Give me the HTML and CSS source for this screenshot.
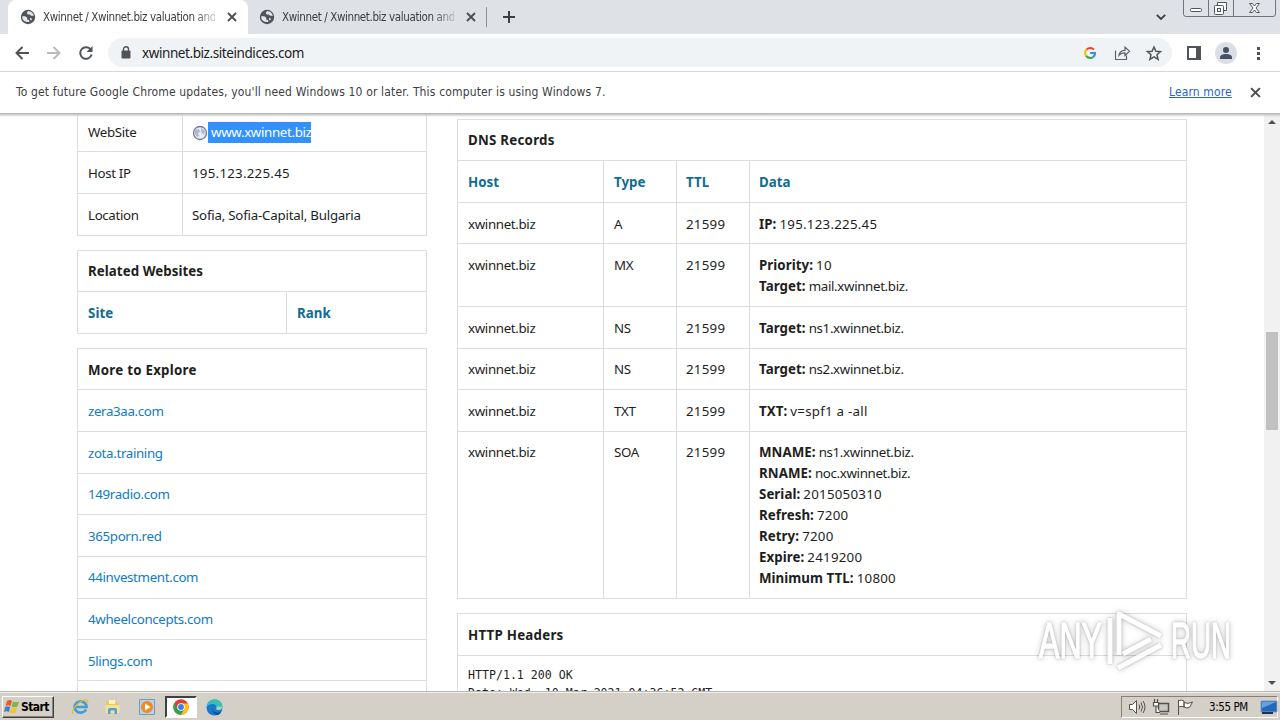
FILE: index.html
```html
<!DOCTYPE html>
<html lang="en">
<head>
<meta charset="utf-8">
<title>Xwinnet / Xwinnet.biz valuation and</title>
<link rel="stylesheet" href="styles.css">
</head>
<body>
<svg width="0" height="0" class="defs">
  <symbol id="globe" viewBox="0 0 16 16"><circle cx="8" cy="8" r="7.2" fill="#50545a"/><path d="M2.2 7.2h3.2l1.8 1.6v1.7l2 .8v1.6c-3 .8-6-.8-6.8-3.4zM8 2.1l-1.2 2 .9 1.3h2.1l1.2 1.4h2.8C13.500 4.300 11 2.200 8 2.100zM11 8.500l-1.300 1.300.8 1.400 1.500-.2z" fill="#e3e6ea"/></symbol>
  <symbol id="x" viewBox="0 0 10 10"><path d="M1 1l8 8M9 1l-8 8" stroke="#4a4d51" stroke-width="1.8" fill="none"/></symbol>
</svg>
<div class="screen">
  <header class="tabs">
    <div class="tab active"><svg class="fav"><use href="#globe"/></svg><span class="tab-title">Xwinnet / Xwinnet.biz valuation and</span><svg class="tab-x"><use href="#x"/></svg></div>
    <div class="tab"><svg class="fav"><use href="#globe"/></svg><span class="tab-title">Xwinnet / Xwinnet.biz valuation and</span><svg class="tab-x"><use href="#x"/></svg></div>
    <i class="tab-sep"></i>
    <svg class="plus" width="12" height="12" viewBox="0 0 12 12"><path d="M6 0v12M0 6h12" stroke="#3c4043" stroke-width="2"/></svg>
    <svg class="chev" width="10" height="7" viewBox="0 0 10 7"><path d="M.8.800 5 5l4.200-4.200" fill="none" stroke="#3c4043" stroke-width="1.800"/></svg>
    <svg class="winbtns" width="93" height="17" viewBox="0 0 93 17" fill="none" stroke="#70767e">
      <path d="M.5 0v14q0 2.500 2.500 2.500h87q2.500 0 2.500-2.500V0M25.500 0v16M50.500 0v16" fill="#dfe2e7"/>
      <rect x="7.500" y="8.500" width="11" height="3" rx="1" fill="#fff" stroke="#50565e"/>
      <g stroke="#50565e"><path d="M34.500 5V2.500h9v8H41" fill="#fff"/><rect x="31.500" y="5.500" width="9" height="9" rx="1" fill="#fff"/><rect x="34.500" y="8.500" width="3" height="3"/>
      <path d="M66.500 3.500h3l2 2.500 2-2.500h3l-3.500 4.500 3.500 4.500h-3l-2-2.500-2 2.500h-3l3.500-4.500z" fill="#fff"/></g>
    </svg>
  </header>
  <div class="toolbar">
    <svg class="nav" width="100" height="24" viewBox="0 0 100 24" fill="none" stroke-width="2">
      <path d="M22 12H9.500M15.500 6l-6 6 6 6" stroke="#505357"/>
      <path d="M40 12h12M46.500 6l6 6-6 6" stroke="#b8babd"/>
      <path d="M83.800 8.700A5.800 5.800 0 1 0 84.600 13.500" stroke="#505357"/><path d="M85.500 5v6h-6z" fill="#505357"/>
    </svg>
    <div class="omnibox">
      <svg class="lock" width="10" height="13" viewBox="0 0 10 13"><rect x=".5" y="4.500" width="9" height="8" rx="1" fill="#505357"/><path d="M2.500 5V3.200a2.500 2.500 0 0 1 5 0V5" fill="none" stroke="#505357" stroke-width="1.400"/></svg>
      <span class="url">xwinnet.biz.siteindices.com</span>
      <svg class="omni-icons" width="80" height="20" viewBox="0 0 80 20" fill="none">
        <g stroke-width="2.100"><path d="M9.900 6.600A5 5 0 0 0 2.500 6.600" stroke="#ea4335"/><path d="M2.500 6.500a5.200 5.200 0 0 0-.2 6.500" stroke="#fbbc05"/><path d="M2.200 12.800a5 5 0 0 0 7.100 1.200" stroke="#34a853"/><path d="M9.300 14A4.800 4.800 0 0 0 11 10H6.200" stroke="#4285f4"/></g>
        <path d="M31.500 7.500v9h11v-4M35 12.500q.5-5 6-5.200V4.100l4.500 4.200-4.500 4.200V9.900q-4-.1-6 2.600z" stroke="#5f6368" stroke-width="1.200"/>
        <path d="M70 4l1.900 4.300 4.600.4-3.500 3.100 1.100 4.600-4.100-2.500-4.100 2.500 1.100-4.600-3.500-3.100 4.600-.4z" stroke="#505357" stroke-width="1.500"/>
      </svg>
    </div>
    <svg class="right-icons" width="84" height="24" viewBox="0 0 84 24">
      <rect x="2" y="6" width="12" height="12" fill="none" stroke="#505357" stroke-width="2"/><path d="M10 5H15v14H10z" fill="#505357"/>
      <circle cx="40" cy="12" r="11" fill="#dadfe6"/><circle cx="40" cy="9" r="3" fill="#475066"/><path d="M34 18v-1.500q0-3.500 6-3.500t6 3.500V18z" fill="#475066"/>
      <path d="M71 6h3v3h-3zM71 11h3v3h-3zM71 16h3v3h-3z" fill="#505357"/>
    </svg>
  </div>
  <div class="infobar"><span class="notice">To get future Google Chrome updates, you'll need Windows 10 or later. This computer is using Windows 7.</span><span class="learn">Learn more</span><svg class="info-x"><use href="#x"/></svg></div>
  <main class="page">
    <div class="col left">
      <section class="panel site">
        <div class="row first"><div class="cell">WebSite</div><div class="cell"><svg width="16" height="16" viewBox="0 0 16 16"><circle cx="8" cy="8" r="6.500" fill="#e9edf5" stroke="#77779b" stroke-width="1.300"/><path d="M3 5l4-1 1 3-2 1 1 3-2 1-2-3zM9 3l4 3-1 4-3-3z" fill="#aeb8d4"/></svg><span class="selected">&nbsp;www.xwinnet.biz</span></div></div>
        <div class="row r42"><div class="cell">Host IP</div><div class="cell num">195.123.225.45</div></div>
        <div class="row r42"><div class="cell">Location</div><div class="cell loc">Sofia, Sofia-Capital, Bulgaria</div></div>
      </section>
      <section class="panel boxed related">
        <div class="row r41 high"><h2>Related Websites</h2></div>
        <div class="row r42 head"><div class="cell">Site</div><div class="cell">Rank</div></div>
      </section>
      <section class="panel boxed links">
        <div class="row r41"><h2>More to Explore</h2></div>
        <div class="row r42"><a>zera3aa.com</a></div>
        <div class="row r42"><a>zota.training</a></div>
        <div class="row r41 high"><a>149radio.com</a></div>
        <div class="row r42"><a>365porn.red</a></div>
        <div class="row r42 high"><a>44investment.com</a></div>
        <div class="row r41 high"><a>4wheelconcepts.com</a></div>
        <div class="row r41"><a>5lings.com</a></div>
        <div class="row r41"></div>
      </section>
    </div>
    <div class="col right">
      <section class="panel boxed dns">
        <div class="row r41 high"><h2>DNS Records</h2></div>
        <div class="row r42 head"><div class="cell">Host</div><div class="cell">Type</div><div class="cell">TTL</div><div class="cell">Data</div></div>
        <div class="row r41"><div class="cell">xwinnet.biz</div><div class="cell">A</div><div class="cell num">21599</div><div class="cell"><p><b>IP:</b> <span class="num">195.123.225.45</span></p></div></div>
        <div class="row r63"><div class="cell">xwinnet.biz</div><div class="cell">MX</div><div class="cell num">21599</div><div class="cell"><p><b>Priority:</b> <span class="num">10</span></p><p><b>Target:</b> mail.xwinnet.biz.</p></div></div>
        <div class="row r42"><div class="cell">xwinnet.biz</div><div class="cell">NS</div><div class="cell num">21599</div><div class="cell"><p><b>Target:</b> ns1.xwinnet.biz.</p></div></div>
        <div class="row r41 high"><div class="cell">xwinnet.biz</div><div class="cell">NS</div><div class="cell num">21599</div><div class="cell"><p><b>Target:</b> ns2.xwinnet.biz.</p></div></div>
        <div class="row r42"><div class="cell">xwinnet.biz</div><div class="cell">TXT</div><div class="cell num">21599</div><div class="cell"><p><b>TXT:</b> <span class="num">v=spf1 a -all</span></p></div></div>
        <div class="row r167 high"><div class="cell">xwinnet.biz</div><div class="cell">SOA</div><div class="cell num">21599</div><div class="cell"><p><b>MNAME:</b> ns1.xwinnet.biz.</p><p><b>RNAME:</b> noc.xwinnet.biz.</p><p><b>Serial:</b> <span class="num">2015050310</span></p><p><b>Refresh:</b> <span class="num">7200</span></p><p><b>Retry:</b> <span class="num">7200</span></p><p><b>Expire:</b> <span class="num">2419200</span></p><p><b>Minimum TTL:</b> <span class="num">10800</span></p></div></div>
      </section>
      <section class="panel boxed http">
        <div class="row r42"><h2>HTTP Headers</h2></div>
        <pre>HTTP/1.1 200 OK
Date: Wed, 10 Mar 2021 04:36:52 GMT</pre>
      </section>
    </div>
    <div class="scroll"><i class="up"></i><i class="thumb"></i><i class="down"></i></div>
  </main>
  <footer class="taskbar">
    <div class="start"><svg width="16" height="16" viewBox="0 0 16 16"><path d="M3 2q3-2 5 0L6.500 7q-2-1.500-5 0z" fill="#e65a2c"/><path d="M9 2.500q3 1.500 6 0l-1.500 5q-3 1.500-6 0z" fill="#79b943"/><path d="M1.200 8q3-1.500 5 0L5 13q-2-1.500-5 0z" fill="#3c82c9"/><path d="M7.200 8.500q3 1.500 6 0l-1.500 5q-3 1.500-6 0z" fill="#f5c330"/></svg><b>Start</b></div>
    <svg class="ql ie" width="18" height="18" viewBox="0 0 18 18" fill="none"><path d="M15 11.500a6 5.600 0 1 1 .6-2.500H5" stroke="#3f9ed8" stroke-width="2.600"/><path d="M2 15.500C-1 12 12-1 16.500 2.500q.8.700-.3 2.500" stroke="#e5b83c" stroke-width="1.300"/></svg>
    <svg class="ql folder" width="18" height="18" viewBox="0 0 18 18"><path d="M2 3h5l1.500 1.500H15V15H2z" fill="#e8c968"/><path d="M5 2h6v4H5z" fill="#fff3b9"/><path d="M1.500 7h14v8h-14z" fill="#f6e296"/><path d="M4 16v-4.500q0-1.500 1.500-1.500h6q1.500 0 1.500 1.500V16h-2.500v-3.500h-4V16z" fill="#56a2cf"/></svg>
    <svg class="ql wmp" width="18" height="18" viewBox="0 0 18 18"><path d="M1.500 1.500h15v15h-15z" fill="#b9d2ea" stroke="#6f9bc4"/><circle cx="9" cy="9" r="6" fill="#f28a1c"/><path d="M7 5.500 12.500 9 7 12.500z" fill="#fff"/></svg>
    <div class="task-active"><svg width="16" height="16" viewBox="0 0 16 16"><circle cx="8" cy="8" r="7.700" fill="#e33e32"/><path d="M1.300 4.200A7.700 7.700 0 0 0 8 15.700L11.300 10 8 8H4z" fill="#2fa24d"/><path d="M8 15.700A7.700 7.700 0 0 0 14.700 4.500H8L11.300 10z" fill="#fcc31e"/><circle cx="8" cy="8" r="3.800" fill="#fff"/><circle cx="8" cy="8" r="2.900" fill="#3c7de8"/></svg></div>
    <svg class="ql edge" width="17" height="17" viewBox="0 0 17 17"><circle cx="8.500" cy="8.500" r="8" fill="#1879c8"/><path d="M.6 8C1 3.500 4.500.5 8.500.500c5 0 8 3.500 8 6.800 0 4-4.500 4.600-6.500 3.200 1-1 1.200-2.500.3-3.800C8.500 4 3 4.500.600 8z" fill="#36bfb2"/><path d="M6.500 8q-1.500 5 5 5.700 2 .2 4-1.200-1.200 2.500-3.500 3.500C8 16 5 12 6.500 8z" fill="#144b93"/><path d="M10 10.500q1-1 .3-3l6.200.2q-.1 4-6.500 2.800z" fill="#d6d4cc" opacity=".75"/></svg>
    <div class="tray">
      <svg width="66" height="18" viewBox="0 0 66 18" fill="#fff" stroke="#55524d">
        <path d="M1.500 6.500h3l4-4v13l-4-4h-3z"/><path d="M11 6.500q1.500 2.500 0 5M13 4.500q3 4.500 0 9M15 3q4 6 0 12" fill="none"/>
        <path d="M30.500 5.500h10v8h-10z" fill="#c8c8c4" stroke-width="1.500"/><path d="M32 16h8M26.500 1v4M29.500 1v4M25.500 4.500h5V8h-5zM28 8v6.500h4" stroke-width="1.200"/>
        <path d="M50.500 17V2M50.500 2.500q3-1 5.500.5v6q-3-1.500-5.500 0zM56 4.500q4 2 8.500-.5l-3 5.500q-3 1-5.500-.5z"/>
      </svg>
      <span class="clock">3:55 PM</span>
      <svg width="18" height="16" viewBox="0 0 18 16"><path d="M1 2h16v11H1z" fill="#2669bb" stroke="#7b9bc1"/><path d="M2 3h14l-14 6z" fill="#65a0e1"/><path d="M2 14h11" stroke="#1c3258" stroke-width="2"/></svg>
    </div>
  </footer>
  <svg class="watermark" width="204" height="68" viewBox="0 0 204 68">
    <g fill="#fff" stroke="#fff" stroke-width="1.500">
      <text x="2" y="50" textLength="63" lengthAdjust="spacingAndGlyphs">ANY</text>
      <text x="134" y="50" textLength="60" lengthAdjust="spacingAndGlyphs">RUN</text>
    </g>
    <g fill="none" stroke="#fff" stroke-width="5" stroke-linejoin="round"><path d="M82 47V6l42 22"/><path d="M73 10v46M81 60l43-23M86 46l28-15"/></g>
  </svg>
</div>
</body>
</html>
```
FILE: styles.css
```css
* { box-sizing: border-box; }
body { margin: 0; font-family: "Noto Sans", sans-serif; }
.defs { position: absolute; }
.screen { position: relative; width: 1280px; height: 720px; overflow: hidden; display: flex; flex-direction: column; background: #fff; }
svg { flex: none; display: block; }

.tabs { height: 34px; flex: none; background: #dee1e6; display: flex; align-items: center; padding-left: 8px; font-size: 12px; color: #3c4043; }
.tab { width: 239px; height: 34px; display: flex; align-items: center; padding-left: 12px; }
.tab.active { width: 240px; background: #fff; border-radius: 8px 8px 0 0; }
.fav { width: 16px; height: 16px; }
.tab:not(.active) .fav { margin-left: -1px; }
.tab-title { width: 172px; margin-left: 7px; white-space: nowrap; overflow: hidden; font-family: "DejaVu Sans Condensed", "DejaVu Sans", sans-serif; font-size: 11.5px; letter-spacing: -.38px; -webkit-mask-image: linear-gradient(90deg, #000 150px, rgba(0,0,0,.25)); }
.tab-x { width: 10px; height: 10px; margin-left: 12px; }
.tab-sep { width: 1px; height: 20px; background: #8c9095; margin-left: -1px; }
.plus { margin-left: 16px; }
.chev { margin-left: 641px; }
.winbtns { margin-left: 17px; align-self: flex-start; }

.toolbar { height: 38px; flex: none; display: flex; align-items: center; border-bottom: 1px solid #d5d7da; padding-left: 7px; }
.omnibox { width: 1064px; height: 29px; margin-left: 1px; border-radius: 15px; background: #f0f3f5; display: flex; align-items: center; padding-left: 13px; }
.url { margin-left: 11px; width: 200px; font-size: 13.5px; letter-spacing: -.42px; color: #202124; white-space: nowrap; }
.omni-icons { margin-left: 742px; }
.right-icons { margin-left: 14px; }

.infobar { height: 41px; flex: none; display: flex; align-items: center; padding: 0 0 1px 16px; font-family: "DejaVu Sans Condensed", "DejaVu Sans", sans-serif; font-size: 12px; color: #3c4043; white-space: nowrap; }
.notice { width: 1153px; letter-spacing: .155px; }
.learn { width: 64px; color: #2a65c4; text-decoration: underline; letter-spacing: .12px; }
.info-x { width: 11px; height: 11px; margin-left: 17px; }

.page { position: relative; height: 578px; flex: none; display: flex; padding-left: 77px; overflow: hidden; color: #1e1e1e; font-size: 13.3px; line-height: 21px; letter-spacing: -.34px; }
.page::before { content: ""; position: absolute; left: 0; right: 0; top: -1px; height: 5px; background: linear-gradient(#999, #ccc 50%, rgba(255,255,255,0)); z-index: 2; }
.col { display: flex; flex-direction: column; gap: 14px; flex: none; }
.left { width: 350px; }
.right { width: 730px; margin-left: 30px; padding-top: 6px; }
.panel { flex: none; border: 1px solid #ddd; border-width: 0 1px; }
.panel.boxed { border-top-width: 1px; }
.row { display: grid; border-bottom: 1px solid #ddd; white-space: nowrap; }
.first { height: 39px; }
.r41 { height: 41px; }
.r42 { height: 42px; }
.r63 { height: 63px; }
.r167 { height: 167px; }
.cell, h2, .links a { padding: 11px 0 0 10px; }
.high .cell, .high h2, .links .high a { padding-top: 10px; }
.cell + .cell { border-left: 1px solid #ddd; padding-left: 9px; }
.dns .cell:nth-child(2), .related .cell:nth-child(2) { padding-left: 10px; }
.cell p { margin: 0; }
.num { letter-spacing: .25px; }
.loc { letter-spacing: -.22px; }
b { letter-spacing: .05px; }
h2 { margin: 0; font-size: 13.3px; font-weight: 700; line-height: 21px; letter-spacing: .25px; }
.related h2 { letter-spacing: .06px; }
.site .row { grid-template-columns: 104px 1fr; }
.row.first .cell { padding-top: 9px; display: flex; }
.first .cell svg { margin-top: 3px; }
.selected { height: 21px; background: #3390ff; color: #fff; }
.related .head { grid-template-columns: 208px 1fr; }
.dns .row { grid-template-columns: 145px 73px 73px 1fr; }
.dns .row h2 { grid-column: 1 / -1; }
.head { font-weight: 700; color: #0f6c93; letter-spacing: .05px; }
.links a { color: #0f7acb; }
.http pre { margin: 0; padding: 10px 0 0 10px; font: 11.6px/18px "DejaVu Sans Mono", monospace; letter-spacing: 0; }

.scroll { width: 16px; height: 578px; margin-left: 77px; background: #f1f1f1; display: flex; flex-direction: column; align-items: center; }
.up { margin-top: 7px; border: 4px solid transparent; border-bottom: 4px solid #505050; border-top: 0; }
.thumb { width: 12px; height: 98px; background: #c1c1c1; margin: 208px 0 251px; }
.down { border: 4px solid transparent; border-top: 4px solid #505050; border-bottom: 0; }

.taskbar { height: 29px; flex: none; background: #d4cfc7; border-top: 1px solid #b9b7b2; box-shadow: inset 0 1px #f2efea; display: flex; align-items: center; padding: 2px 2px 0; font-family: "DejaVu Sans Condensed", sans-serif; font-size: 12px; color: #000; }
.start { width: 52px; height: 22px; display: flex; align-items: center; gap: 1px; border: 1px solid; border-color: #fff #404040 #404040 #fff; box-shadow: inset -1px -1px #87837c; padding-left: 1px; }
.start b { letter-spacing: -.6px; }
.ie { margin-left: 17px; }
.folder { margin-left: 15px; }
.wmp { margin-left: 16px; }
.task-active { width: 32px; height: 22px; margin-left: 9px; background: #fff; border: 2px solid; border-color: #404040 #fff #fff #404040; display: grid; place-items: center; }
.edge { margin-left: 9px; }
.tray { width: 157px; height: 22px; margin-left: auto; border: 1px solid; border-color: #85817a #fff #fff #85817a; display: flex; align-items: center; padding-left: 6px; }
.clock { width: 39px; margin: 0 12px 0 15px; font-size: 11.500px; letter-spacing: -.4px; white-space: nowrap; }

.watermark { position: absolute; left: 1037px; top: 608px; z-index: 4; opacity: .85; filter: drop-shadow(0 0 1px rgba(0,0,0,.28)) drop-shadow(0 0 3px rgba(0,0,0,.25)); font: 50px "Liberation Sans Narrow", "Liberation Sans", sans-serif; }
```
